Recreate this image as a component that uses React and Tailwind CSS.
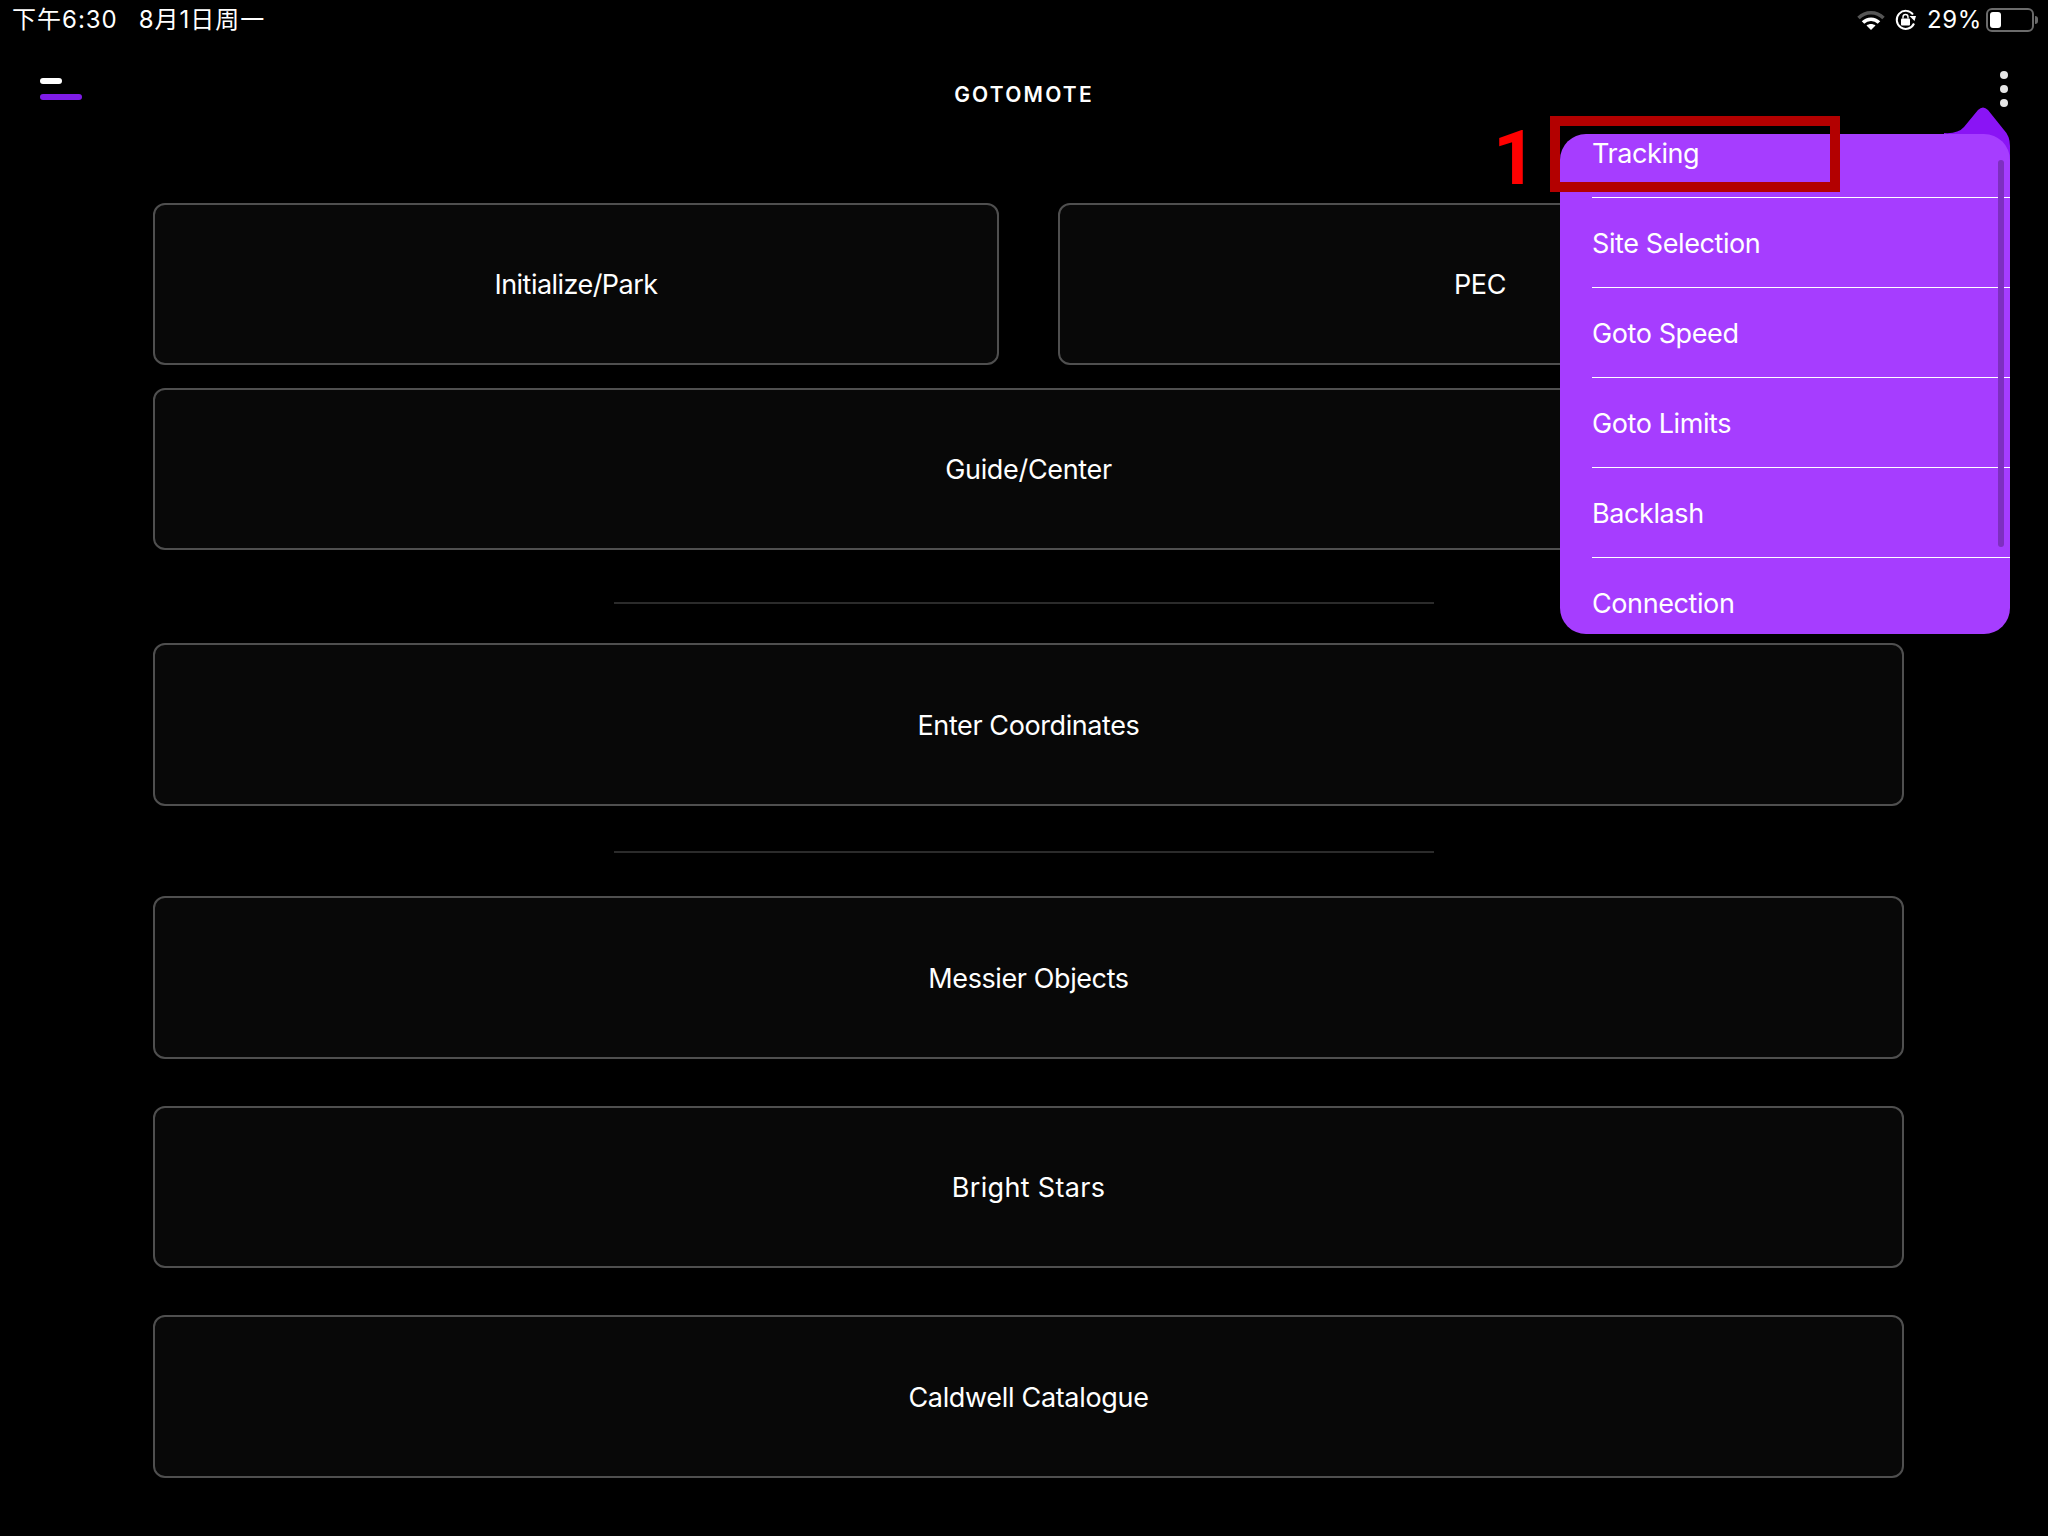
import React from "react";

const menuItems = ["Tracking", "Site Selection", "Goto Speed", "Goto Limits", "Backlash", "Connection"];

function Card({ label, className = "" }) {
  return (
    <div className={`flex items-center justify-center rounded-[12px] border-2 border-[#4f4f4f] bg-[#080808] pt-[3px] text-[27px] text-white ${className}`}>
      {label}
    </div>
  );
}

function Divider({ className = "" }) {
  return <div className={`ml-[461px] h-[2px] w-[820px] bg-[#2b2b2b] ${className}`}></div>;
}

function StatusBar() {
  return (
    <div className="flex h-[40px] items-center justify-between pl-[12px] pr-[10px] text-[24px] text-white">
      <div className="flex gap-[21px] tracking-[1px]">
        <span>下午6:30</span>
        <span>8月1日周一</span>
      </div>
      <div className="flex items-center">
        <svg width="28" height="20" viewBox="0 0 28 20" className="mr-[9px]">
          <path d="M1.5 8 C8.5 1 19.5 1 26.5 8" fill="none" stroke="#555" strokeWidth="3.5" />
          <path d="M6 12.5 C10.5 8 17.5 8 22 12.5" fill="none" stroke="#fff" strokeWidth="3.5" />
          <path d="M14 20 L9.5 15.5 C12 13.5 16 13.5 18.5 15.5 Z" fill="#fff" />
        </svg>
        <svg width="24" height="22" viewBox="0 0 24 22" className="mr-[9px]">
          <path d="M20 14.5 A9 9 0 1 1 19 5.5" fill="none" stroke="#fff" strokeWidth="2" />
          <path d="M15.5 7 L22 7 L20.5 12 Z" fill="#fff" />
          <rect x="7" y="9.5" width="9" height="7" rx="1" fill="#fff" />
          <path d="M9 9.5 V8 A2.5 2.5 0 0 1 14 8 V9.5" fill="none" stroke="#fff" strokeWidth="1.4" />
        </svg>
        <span className="mr-[4px] tracking-[0.6px]">29%</span>
        <div className="flex items-center">
          <div className="flex h-[24px] w-[48px] items-center rounded-[6px] border-2 border-[#6b6b6b] p-[2px]">
            <div className="h-full w-[11px] rounded-[3px] bg-white"></div>
          </div>
          <div className="ml-[1px] h-[8px] w-[3px] rounded-r-full bg-[#6b6b6b]"></div>
        </div>
      </div>
    </div>
  );
}

function Header() {
  return (
    <div className="relative flex h-[108px] items-center justify-center pt-[2px]">
      <div className="absolute left-[40px] top-[38px] flex flex-col gap-[10px]">
        <div className="h-[6px] w-[22px] rounded-full bg-white"></div>
        <div className="h-[6px] w-[42px] rounded-full bg-[#7f1ce8]"></div>
      </div>
      <span className="text-[21px] font-semibold tracking-[0.105em] text-white">GOTOMOTE</span>
      <div className="absolute left-[2000px] top-[31px] flex flex-col gap-[6px]">
        <div className="h-[8px] w-[8px] rounded-full bg-[#e6e6e6]"></div>
        <div className="h-[8px] w-[8px] rounded-full bg-[#e6e6e6]"></div>
        <div className="h-[8px] w-[8px] rounded-full bg-[#e6e6e6]"></div>
      </div>
    </div>
  );
}

function Menu() {
  return (
    <>
      <svg width="70" height="70" viewBox="0 0 70 70" className="absolute left-[1940px] top-[100px]">
        <path d="M4 33 Q18 34 24 27 L38 10 Q43 5 48 10 L64 30 Q70 36 70 46 L70 70 L4 70 Z" fill="#8a14f5" />
      </svg>
      <div className="absolute left-[1560px] top-[134px] h-[500px] w-[450px] overflow-hidden rounded-[26px] bg-[#a63dff]">
        <div className="-mt-[26px] pl-[32px]">
          {menuItems.map((item, i) => (
            <div
              key={item}
              className={`flex h-[90px] items-center pt-[3px] text-[27px] tracking-[-0.015em] text-white ${i < menuItems.length - 1 ? "border-b border-white" : ""}`}
            >
              {item}
            </div>
          ))}
        </div>
        <div className="absolute right-[6px] top-[26px] h-[387px] w-[6px] rounded-full bg-[#7e2fc0]"></div>
      </div>
      {/* annotation added on top of the screenshot */}
      <div className="absolute left-[1550px] top-[116px] h-[76px] w-[290px] border-[10px] border-[#b30000]"></div>
      <span className="absolute left-[1493px] top-[112px] font-['Roboto',sans-serif] text-[76px] font-bold leading-[92px] text-[#ff0000]">1</span>
    </>
  );
}

export default function App() {
  return (
    <div className="relative h-[1536px] w-[2048px] overflow-hidden bg-black font-['Inter','Noto_Sans_CJK_SC',sans-serif]">
      <StatusBar />
      <Header />
      <div className="ml-[153px] flex w-[1751px] flex-col">
        <div className="mt-[55px] flex gap-[59px]">
          <Card label="Initialize/Park" className="h-[162px] w-[846px] tracking-[-0.02em]" />
          <Card label="PEC" className="h-[162px] flex-1 pr-[2px] tracking-[-0.012em]" />
        </div>
        <Card label="Guide/Center" className="mt-[23px] h-[162px] tracking-[-0.012em]" />
        <Divider className="mt-[52px]" />
        <Card label="Enter Coordinates" className="mt-[39px] h-[163px] tracking-[-0.015em]" />
        <Divider className="mt-[45px]" />
        <Card label="Messier Objects" className="mt-[43px] h-[163px] tracking-[-0.015em]" />
        <Card label="Bright Stars" className="mt-[47px] h-[162px] tracking-[0.012em]" />
        <Card label="Caldwell Catalogue" className="mt-[47px] h-[163px] tracking-[-0.012em]" />
      </div>
      <Menu />
    </div>
  );
}
